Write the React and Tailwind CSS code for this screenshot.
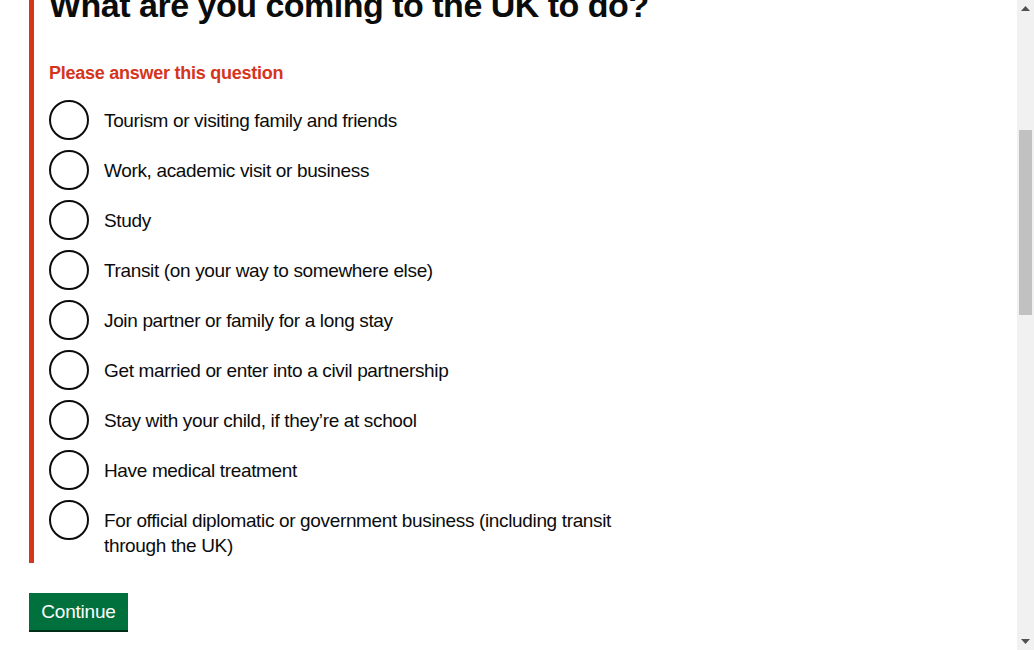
import React from 'react';

const options = [
  'Tourism or visiting family and friends',
  'Work, academic visit or business',
  'Study',
  'Transit (on your way to somewhere else)',
  'Join partner or family for a long stay',
  'Get married or enter into a civil partnership',
  'Stay with your child, if they\u2019re at school',
  'Have medical treatment',
  'For official diplomatic or government business (including transit through the UK)',
];

const Radio = ({ label }) => (
  <div className="flex items-start min-h-10">
    <span className="w-10 h-10 shrink-0 rounded-full border-2 border-[#0b0c0c] bg-white" />
    <label className="flex-1 pl-[15px] pr-[15px] pt-2 pb-[5px] text-[19px] leading-[25px] tracking-[-0.35px] text-[#0b0c0c]">
      {label}
    </label>
  </div>
);

const Scrollbar = () => (
  <div className="w-[17px] h-full bg-[#f1f1f1] flex flex-col items-center">
    <svg width="9" height="5" viewBox="0 0 9 5" className="mt-[6px]">
      <path d="M0 5 L4.5 0 L9 5 Z" fill="#505050" />
    </svg>
    <div className="w-[13px] h-[185px] mt-[119px] bg-[#c1c1c1]" />
    <div className="flex-1" />
    <svg width="9" height="5" viewBox="0 0 9 5" className="mb-[6px]">
      <path d="M0 0 L9 0 L4.5 5 Z" fill="#505050" />
    </svg>
  </div>
);

export default function App() {
  return (
    <div
      className="flex w-[1034px] h-[650px] overflow-hidden bg-white text-[#0b0c0c]"
      style={{ fontFamily: '"Liberation Sans", Arial, sans-serif' }}
    >
      <div className="flex-1 pl-[29px]">
        <div className="w-[650px] border-l-[5px] border-[#d4351c] pl-[15px]">
          <h1 className="-mt-[15px] whitespace-nowrap text-[34px] leading-[40px] font-bold tracking-[-0.5px]">
            What are you coming to the UK to do?
          </h1>
          <p className="mt-[36px] text-[18px] leading-[25px] font-bold tracking-[-0.25px] text-[#d4351c]">
            Please answer this question
          </p>
          <div className="mt-[14px] flex flex-col gap-[10px]">
            {options.map((o) => (
              <Radio key={o} label={o} />
            ))}
          </div>
        </div>
        <button className="mt-[30px] w-[99px] h-[37px] bg-[#00703c] text-white text-[19px] leading-[19px] tracking-[-0.2px] shadow-[0_2px_0_#002d18]">
          Continue
        </button>
      </div>
      <Scrollbar />
    </div>
  );
}
